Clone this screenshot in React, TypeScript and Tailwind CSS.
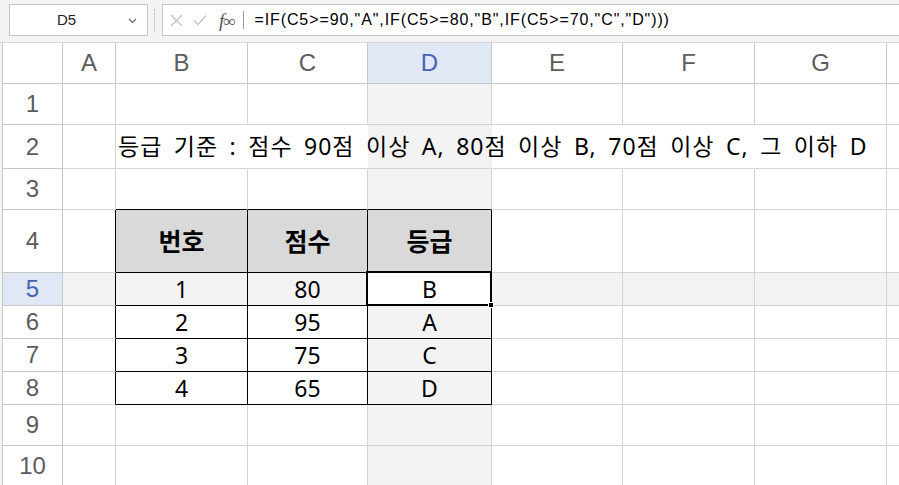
import React from "react";

const colW = [
  "w-[61px]",
  "w-[53px]",
  "w-[132px]",
  "w-[120px]",
  "w-[124px]",
  "w-[131px]",
  "w-[132px]",
  "w-[132px]",
  "w-[40px]",
];
const rowH = [
  "h-[41px]",
  "h-[44px]",
  "h-[41px]",
  "h-[63px]",
  "h-[33px]",
  "h-[33px]",
  "h-[33px]",
  "h-[33px]",
  "h-[41px]",
  "h-[41px]",
];
const letters = ["A", "B", "C", "D", "E", "F", "G", ""];

const hdrFont = { fontFamily: '"Liberation Sans", Arial, sans-serif' };
const cellFont = { fontFamily: '"Noto Sans", "Noto Sans CJK KR", sans-serif' };

const tableData: Record<string, string> = {
  "4-1": "번호",
  "4-2": "점수",
  "4-3": "등급",
  "5-1": "1",
  "5-2": "80",
  "5-3": "B",
  "6-1": "2",
  "6-2": "95",
  "6-3": "A",
  "7-1": "3",
  "7-2": "75",
  "7-3": "C",
  "8-1": "4",
  "8-2": "65",
  "8-3": "D",
};

function Cell({ r, c }: { r: number; c: number }) {
  const inTable = r >= 4 && r <= 8 && c >= 1 && c <= 3;
  const leftOfTable = r >= 4 && r <= 8 && c === 0;
  const aboveTable = r === 3 && c >= 1 && c <= 3;
  const overflowRow = r === 2 && c >= 1 && c <= 5;

  let right = "border-r border-r-[#d4d4d4]";
  if (inTable || leftOfTable) right = "border-r border-r-black";
  else if (overflowRow) right = "border-r border-r-transparent";
  if (c === 7) right = "";

  let bottom = "border-b border-b-[#d4d4d4]";
  if (inTable || aboveTable) bottom = "border-b border-b-black";

  let bg = "bg-white";
  if (c === 3 || r === 5) bg = "bg-[#f3f3f3]";
  if (r === 4 && inTable) bg = "bg-[#d9d9d9]";
  if (r === 5 && c === 3) bg = "bg-white";

  const key = `${r}-${c}`;
  const text = tableData[key];
  const isHead = r === 4;
  const active = r === 5 && c === 3;

  return (
    <div
      className={`${colW[c + 1]} shrink-0 h-full ${right} ${bottom} ${bg} flex items-center justify-center ${
        active ? "relative" : ""
      }`}
    >
      {text && (
        <span
          className={`text-black ${isHead ? "text-[25px] font-bold" : "text-[23px]"} leading-none`}
          style={cellFont}
        >
          {text}
        </span>
      )}
      {r === 2 && c === 1 && (
        <div className="w-full h-full flex items-center pl-[2px]">
          <span
            className="relative z-10 whitespace-nowrap text-[23px] text-black leading-none tracking-[1px]"
            style={{ ...cellFont, wordSpacing: "4.5px" }}
          >
            등급 기준 : 점수 90점 이상 A, 80점 이상 B, 70점 이상 C, 그 이하 D
          </span>
        </div>
      )}
      {active && (
        <div className="absolute left-[-2px] top-[-2px] right-[-1px] bottom-[-1px] border-2 border-black pointer-events-none">
          <div className="absolute right-[-4px] bottom-[-4px] w-[6px] h-[6px] bg-black border border-white" />
        </div>
      )}
    </div>
  );
}

export default function App() {
  return (
    <div className="w-[899px] h-[485px] overflow-hidden bg-[#f3f3f3] select-none">
      {/* Toolbar */}
      <div className="h-[43px] border-b border-[#d6d6d6] flex items-start pt-[4px] bg-[#f3f3f3]">
        <div className="ml-[9px] w-[139px] h-[32px] bg-white border border-[#c6c6c6] flex items-center relative">
          <span className="flex-1 text-center text-[15px] text-[#222] pr-[24px]" style={hdrFont}>
            D5
          </span>
          <svg className="absolute right-[10px] top-[13px]" width="9" height="6" viewBox="0 0 9 6">
            <path d="M1 1 L4.5 4.5 L8 1" stroke="#666" strokeWidth="1.2" fill="none" />
          </svg>
        </div>
        <div className="ml-[6px] mt-[5px] h-[22px] w-0 border-l border-dotted border-[#b0b0b0]" />
        <div className="ml-[7px] flex-1 h-[32px] bg-white border border-[#c6c6c6] border-r-0 flex items-center">
          <svg className="ml-[7px]" width="13" height="13" viewBox="0 0 13 13">
            <path d="M1 1 L12 12 M12 1 L1 12" stroke="#c4c4c4" strokeWidth="1.4" fill="none" />
          </svg>
          <svg className="ml-[10px]" width="14" height="12" viewBox="0 0 14 12">
            <path d="M1 6.5 L5 10.5 L13 1.5" stroke="#c4c4c4" strokeWidth="1.4" fill="none" />
          </svg>
          <span
            className="ml-[12px] text-[19px] italic text-[#555] leading-none tracking-[-1px]"
            style={{ fontFamily: '"Liberation Serif", serif' }}
          >
            f<span className="text-[17px]">∞</span>
          </span>
          <div className="ml-[9px] h-[18px] w-0 border-l border-[#999]" />
          <span
            className="ml-[10px] text-[16px] text-black whitespace-nowrap tracking-[0.9px]"
            style={hdrFont}
          >
            =IF(C5&gt;=90,"A",IF(C5&gt;=80,"B",IF(C5&gt;=70,"C","D")))
          </span>
        </div>
      </div>

      {/* Grid */}
      <div className="pl-[2px]">
        <div className="flex h-[41px]">
          <div className={`${colW[0]} shrink-0 h-full bg-white border-l border-r border-b border-[#c8c8c8]`} />
          {letters.map((l, i) => (
            <div
              key={i}
              className={`${colW[i + 1]} shrink-0 h-full border-b border-b-[#c8c8c8] ${
                i === 7 ? "" : "border-r border-r-[#c8c8c8]"
              } ${i === 3 ? "bg-[#e1e8f5]" : "bg-white"} flex items-center justify-center`}
            >
              <span
                className={`text-[24px] leading-none ${i === 3 ? "text-[#4761b8]" : "text-[#5c5c5c]"}`}
                style={hdrFont}
              >
                {l}
              </span>
            </div>
          ))}
        </div>

        {rowH.map((h, ri) => {
          const r = ri + 1;
          return (
            <div key={r} className={`flex ${h}`}>
              <div
                className={`${colW[0]} shrink-0 h-full border-l border-r border-b border-[#c8c8c8] ${
                  r === 5 ? "bg-[#e1e8f5]" : "bg-white"
                } flex items-center justify-center`}
              >
                <span
                  className={`text-[24px] leading-none ${r === 5 ? "text-[#4761b8]" : "text-[#5c5c5c]"}`}
                  style={hdrFont}
                >
                  {r}
                </span>
              </div>
              {letters.map((_, c) => (
                <Cell key={c} r={r} c={c} />
              ))}
            </div>
          );
        })}
      </div>
    </div>
  );
}
